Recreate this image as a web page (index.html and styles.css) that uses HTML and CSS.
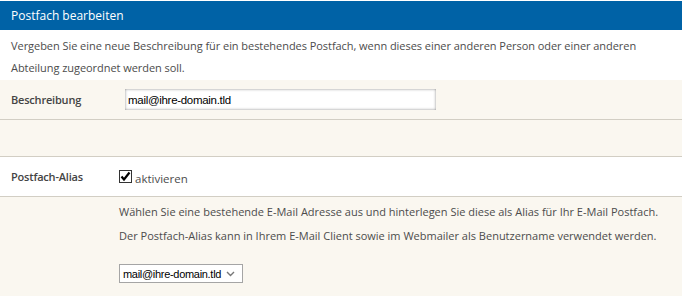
FILE: index.html
```html
<!DOCTYPE html>
<html lang="de">
<head>
  <meta charset="UTF-8">
  <title>Postfach bearbeiten</title>
  <link rel="stylesheet" href="styles.css">
</head>
<body>
  <div class="panel">
    <h1 class="panel-title">Postfach bearbeiten</h1>
    <p class="intro">Vergeben Sie eine neue Beschreibung für ein bestehendes Postfach, wenn dieses einer anderen Person oder einer anderen Abteilung zugeordnet werden soll.</p>

    <div class="row row-alt">
      <label class="row-label" for="desc">Beschreibung</label>
      <div class="row-field">
        <input class="text-input" id="desc" type="text" value="mail@ihre-domain.tld">
      </div>
    </div>

    <div class="row row-alt row-empty"></div>

    <div class="row">
      <span class="row-label">Postfach-Alias</span>
      <div class="row-field">
        <label class="check">
          <span class="check-box">
            <svg width="11" height="11" viewBox="0 0 11 11"><path d="M1.5 5.5 L4 8.5 L9.5 1.5" fill="none" stroke="#000" stroke-width="2.2"/></svg>
          </span>
          <span class="check-text">aktivieren</span>
        </label>
      </div>
    </div>

    <div class="row row-alt row-last">
      <span class="row-label"></span>
      <div class="row-field">
        <p class="hint">Wählen Sie eine bestehende E-Mail Adresse aus und hinterlegen Sie diese als Alias für Ihr E-Mail Postfach.<br>Der Postfach-Alias kann in Ihrem E-Mail Client sowie im Webmailer als Benutzername verwendet werden.</p>
        <div class="select">
          <span>mail@ihre-domain.tld</span>
          <svg width="9" height="6" viewBox="0 0 9 6"><path d="M1 1 L4.5 4.5 L8 1" fill="none" stroke="#777" stroke-width="1.4"/></svg>
        </div>
      </div>
    </div>
  </div>
</body>
</html>
```

FILE: styles.css
```css
body {
  margin: 0;
  padding-top: 1px;
  background: #fff;
  font-family: 'Open Sans', sans-serif;
  font-size: 11px;
  color: #4c4c4c;
}
.panel {
  width: 682px;
}
.panel-title {
  margin: 0;
  height: 29px;
  line-height: 29px;
  padding-left: 11px;
  background: #0062a6;
  color: #fff;
  font-size: 12px;
  font-weight: normal;
}
.intro {
  margin: 0;
  padding: 5px 11px 1px;
  line-height: 22px;
  letter-spacing: -0.05px;
}
.row {
  display: flex;
  align-items: center;
  height: 39px;
  border-bottom: 1px solid #d2cec4;
}
.row-alt {
  background: #faf7f0;
}
.row-empty {
  height: 36px;
}
.row-last {
  align-items: flex-start;
  height: auto;
  border-bottom: none;
  padding-bottom: 20px;
}
.row-label {
  width: 119px;
  padding-left: 11px;
  box-sizing: border-box;
  font-weight: 600;
  letter-spacing: -0.2px;
  color: #444;
  flex-shrink: 0;
}
.row-field {
  flex: 1;
}
.text-input {
  display: block;
  margin-left: 6px;
  width: 311px;
  height: 21px;
  box-sizing: border-box;
  border: none;
  box-shadow: inset 0 0 3px #8c8c8c;
  padding: 0 3px;
  font-family: 'Liberation Sans', sans-serif;
  font-size: 11.5px;
  letter-spacing: -0.3px;
  color: #000;
  background: #fff;
}
.check {
  display: flex;
  align-items: center;
  gap: 3px;
  font-size: 11.5px;
}
.check-text {
  padding-top: 3px;
}
.check-box {
  display: flex;
  align-items: center;
  justify-content: center;
  width: 11px;
  height: 11px;
  border: 1px solid #333;
  background: #fff;
}
.hint {
  margin: 3px 0 0;
  line-height: 24px;
}
.select {
  display: flex;
  align-items: center;
  justify-content: space-between;
  margin-top: 16px;
  width: 124px;
  height: 19px;
  box-sizing: border-box;
  border: 1px solid #a5a5a5;
  background: #fff;
  padding: 0 7px 0 3px;
  white-space: nowrap;
  font-family: 'Liberation Sans', sans-serif;
  font-size: 11px;
  letter-spacing: -0.3px;
  color: #000;
}
```
